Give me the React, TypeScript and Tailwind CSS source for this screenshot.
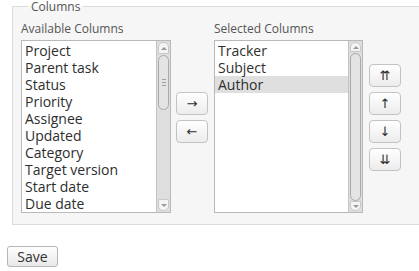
import React from "react"

const available = [
  "Project",
  "Parent task",
  "Status",
  "Priority",
  "Assignee",
  "Updated",
  "Category",
  "Target version",
  "Start date",
  "Due date",
]

const selected = ["Tracker", "Subject", "Author"]

function Scrollbar({ thumbH, grip }: { thumbH: number; grip?: boolean }) {
  return (
    <div className="w-[14px] h-full flex flex-col border-l border-[#c4c4c4] bg-[#dedede]">
      <div className="h-[12px] mx-[1px] mt-[1px] rounded-t-[5px] border border-[#c8c8c8] bg-[#f4f4f4] flex items-center justify-center">
        <div className="w-0 h-0 border-l-[3px] border-r-[3px] border-b-[3px] border-l-transparent border-r-transparent border-b-[#9a9a9a]" />
      </div>
      <div className="flex-1 px-[1px] pt-[1px]">
        <div
          className="rounded-[6px] border border-[#a9a9a9] bg-[#e4e4e4] flex flex-col items-center justify-center gap-[2px]"
          style={{ height: thumbH }}
        >
          {grip && (
            <>
              <div className="w-[4px] h-px bg-[#a0a0a0]" />
              <div className="w-[4px] h-px bg-[#a0a0a0]" />
              <div className="w-[4px] h-px bg-[#a0a0a0]" />
            </>
          )}
        </div>
      </div>
      <div className="h-[12px] mx-[1px] mb-[1px] rounded-b-[5px] border border-[#c8c8c8] bg-[#f4f4f4] flex items-center justify-center">
        <div className="w-0 h-0 border-l-[3px] border-r-[3px] border-t-[3px] border-l-transparent border-r-transparent border-t-[#9a9a9a]" />
      </div>
    </div>
  )
}

function ListBox({ items, active, thumbH, grip }: { items: string[]; active?: string; thumbH: number; grip?: boolean }) {
  return (
    <div className="h-[173px] flex border border-[#b9b9b9] bg-white">
      <div className="flex-1 pt-px overflow-hidden">
        {items.map((it) => (
          <div
            key={it}
            className={`h-[17px] leading-[17px] text-[14px] text-[#2e2e2e] whitespace-nowrap pl-[3px] ${it === active ? "bg-[#dfdfdf]" : ""}`}
          >
            {it}
          </div>
        ))}
      </div>
      <Scrollbar thumbH={thumbH} grip={grip} />
    </div>
  )
}

function ArrowBtn({ glyph }: { glyph: string }) {
  return (
    <button className="w-[32px] h-[23px] rounded-[4px] border border-[#c3c3c3] bg-gradient-to-b from-white to-[#ececec] text-[13px] leading-none text-[#2e2e2e] font-['DejaVu_Sans',sans-serif] flex items-center justify-center">
      {glyph}
    </button>
  )
}

export default function App() {
  return (
    <div className="w-[419px] h-[271px] overflow-hidden bg-white font-['Open_Sans',sans-serif]">
      <fieldset className="ml-[12px] w-[420px] border border-[#dcdcdc] bg-[#f6f6f6] pl-[8px] pb-[11px]">
        <legend className="ml-[7px] px-[3px] text-[12px] leading-[13px] text-[#555]">Columns</legend>
        <div className="flex items-center pt-[8px]">
          <div className="w-[150px]">
            <div className="h-[16px] leading-[16px] text-[12px] text-[#555] mb-[3px]">Available Columns</div>
            <ListBox items={available} thumbH={55} grip />
          </div>
          <div className="ml-[5px] flex flex-col gap-[5px]">
            <ArrowBtn glyph="→" />
            <ArrowBtn glyph="←" />
          </div>
          <div className="ml-[6px] w-[149px]">
            <div className="h-[16px] leading-[16px] text-[12px] text-[#555] mb-[3px]">Selected Columns</div>
            <ListBox items={selected} active="Author" thumbH={148} />
          </div>
          <div className="ml-[6px] flex flex-col gap-[5px]">
            <ArrowBtn glyph="⇈" />
            <ArrowBtn glyph="↑" />
            <ArrowBtn glyph="↓" />
            <ArrowBtn glyph="⇊" />
          </div>
        </div>
      </fieldset>
      <button className="ml-[7px] mt-[21px] w-[51px] h-[21px] rounded-[3px] border border-[#b5b5b5] bg-gradient-to-b from-white to-[#e8e8e8] text-[14px] leading-none text-[#333]">
        Save
      </button>
    </div>
  )
}
